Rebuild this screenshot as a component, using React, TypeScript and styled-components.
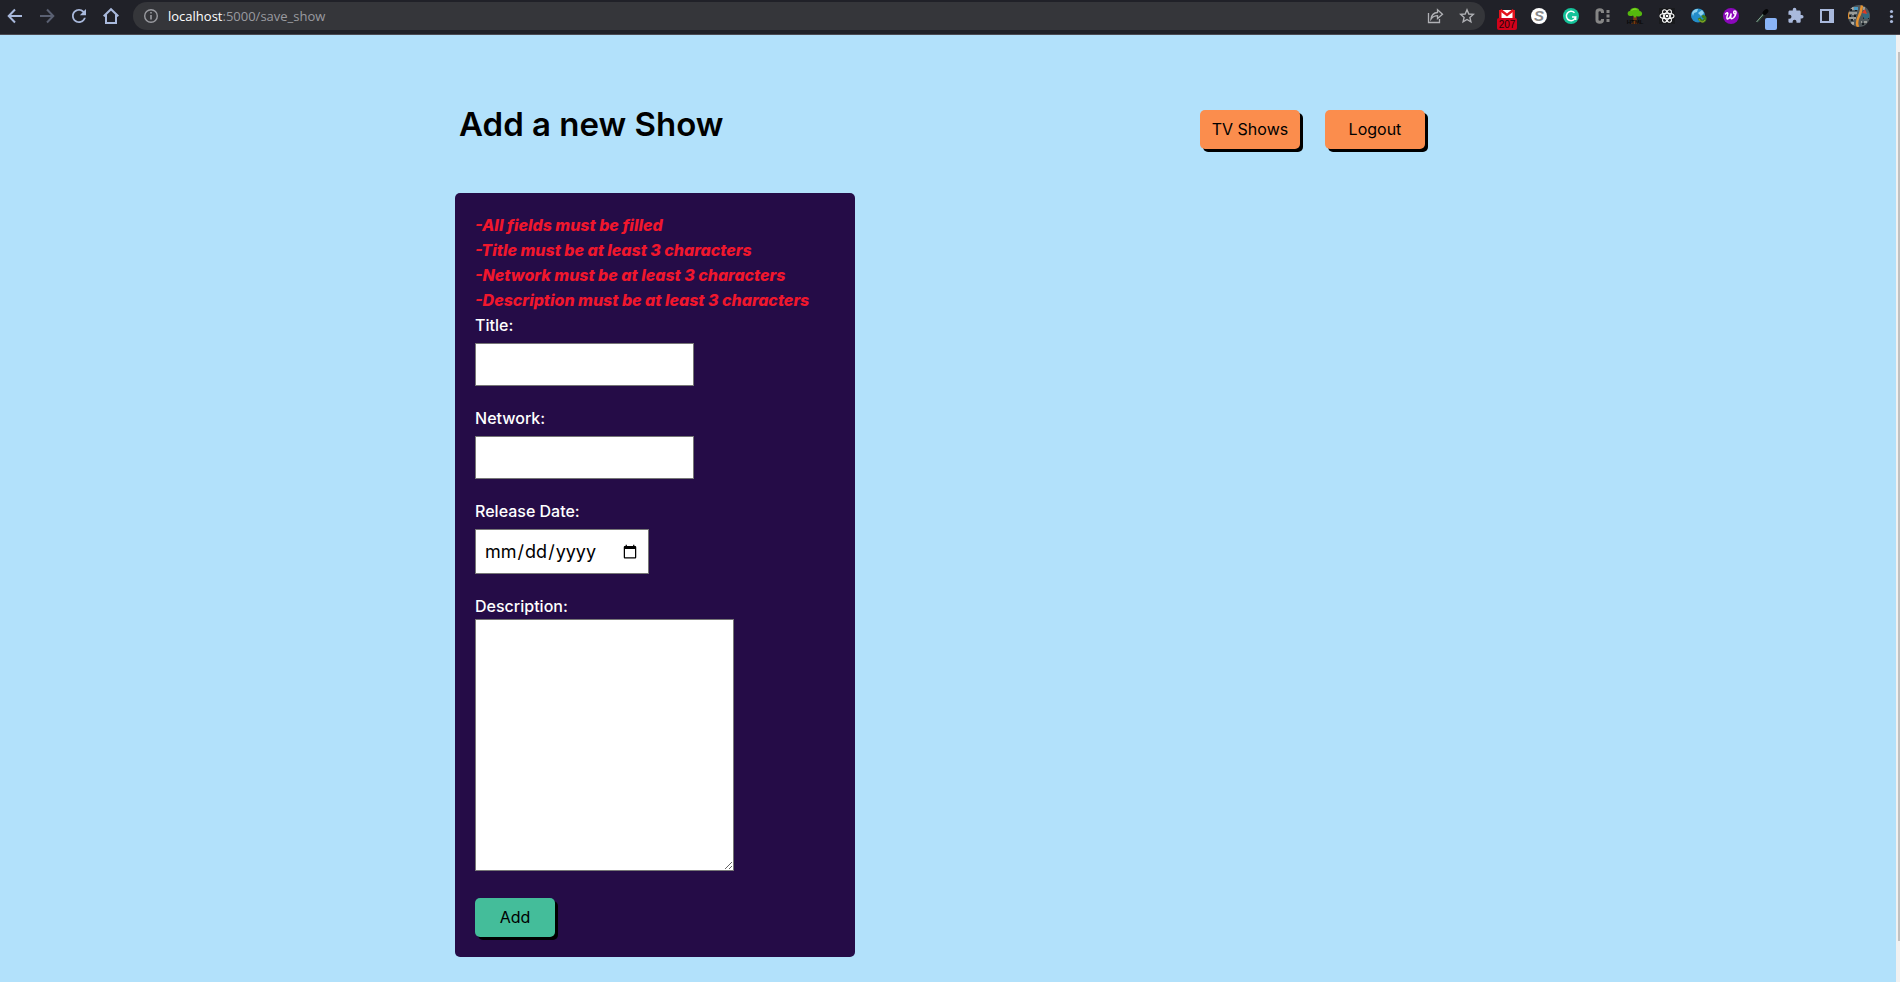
import React from 'react';
import styled, { createGlobalStyle } from 'styled-components';

const Global = createGlobalStyle`
  *, *::before, *::after { box-sizing: border-box; }
  html, body, #root { height: 100%; }
  body {
    margin: 0;
    overflow: hidden;
    background: #b2e1fb;
    color: #000;
    font: 400 16px/25px Inter, "Liberation Sans", sans-serif;
  }
`;

const Window = styled.div`
  display: flex;
  flex-direction: column;
  min-height: 100%;
`;

const Toolbar = styled.nav`
  display: flex;
  align-items: flex-start;
  height: 35px;
  flex: none;
  overflow: hidden;
  background: #202128;
  border-bottom: 1px solid #4a4a52;
`;

const Tool = styled.button<{ $color?: string }>`
  display: block;
  width: 30px;
  height: 32px;
  flex: none;
  padding: 0;
  border: 0;
  background: none;
  color: ${(p) => p.$color ?? '#a9b9dc'};

  svg { display: block; }
`;

const Nav = styled.div`
  display: flex;
  flex: none;
  gap: 2px;
  padding-right: 7px;
`;

const AddressBar = styled.div`
  display: flex;
  align-items: center;
  flex: 1;
  gap: 2px;
  min-width: 0;
  height: 28px;
  margin-top: 2px;
  padding: 0 3px;
  border-radius: 14px;
  background: #35363a;
`;

const Address = styled.p`
  flex: 1;
  margin: 0;
  overflow: hidden;
  color: #9a9ba0;
  font: 13px/28px "Open Sans", "Noto Sans", sans-serif;
  white-space: nowrap;

  b { color: #fff; font-weight: 400; }
`;

const Extensions = styled.div`
  display: flex;
  flex: none;
  gap: 2px;
  margin-right: -6px;
  padding-left: 7px;
`;

const Viewport = styled.div`
  display: flex;
  flex: 1;
`;

const Page = styled.main`
  flex: 1;
  padding: 75px 0 25px;
`;

const ScrollTrack = styled.div`
  display: flex;
  width: 4px;
  padding: 17px 0 41px 2px;
  background: #f1f1f1;
`;

const ScrollThumb = styled.div`
  flex: 1;
  background: #c1c1c1;
`;

const Container = styled.div`
  width: 52%;
  min-width: 720px;
  margin: 0 auto;
`;

const Header = styled.header`
  display: flex;
  justify-content: space-between;
  height: 83px;
  padding: 0 16px 0 4px;
`;

const Heading = styled.h1`
  margin: 0;
  font-size: 33px;
  font-weight: 600;
  line-height: 28px;
`;

const Actions = styled.div`
  display: flex;
  gap: 25px;
`;

const Button = styled.button<{ $tone: string; $width: number }>`
  width: ${(p) => p.$width}px;
  height: 39px;
  padding: 0;
  border: 0;
  border-radius: 5px;
  background: ${(p) => p.$tone};
  box-shadow: 3px 3px 0 #000;
  color: #000;
  font: inherit;
`;

const Panel = styled.form`
  display: flex;
  flex-direction: column;
  align-items: flex-start;
  width: 400px;
  padding: 20px;
  border-radius: 5px;
  background: #250c47;
`;

const Errors = styled.ul`
  margin: 0;
  padding: 0;
  color: #f0172d;
  font-style: italic;
  font-weight: 800;
  list-style: none;
`;

const Label = styled.label`
  color: #fff;
  font-weight: 500;
`;

const Field = styled.input<{ $width: number; $height: number }>`
  width: ${(p) => p.$width}px;
  height: ${(p) => p.$height}px;
  margin: 5px 0 20px;
  padding: 8px;
  border: 1px solid #767676;
  border-radius: 0;
  background: #fff;
  color: #000;
  font: inherit;
  font-size: 18px;

  &::-webkit-calendar-picker-indicator {
    width: 16px;
    height: 16px;
  }
`;

const Area = styled.textarea`
  width: 259px;
  height: 252px;
  margin-bottom: 27px;
  padding: 8px;
  border: 1px solid #767676;
  border-radius: 0;
  background: #fff;
  font: inherit;
`;

function Icon({ label, color, children }: { label: string; color?: string; children: React.ReactNode }) {
  return (
    <Tool type="button" aria-label={label} $color={color}>
      <svg width="30" height="32" viewBox="0 0 30 32" fill="none" stroke="currentColor" strokeWidth="2">
        {children}
      </svg>
    </Tool>
  );
}

const messages = [
  '-All fields must be filled',
  '-Title must be at least 3 characters',
  '-Network must be at least 3 characters',
  '-Description must be at least 3 characters',
];

export default function App() {
  return (
    <Window>
      <Global />
      <Toolbar aria-label="Browser">
        <Nav>
          <Icon label="Back"><path d="M22 16H9M15 9.5 8.7 16l6.3 6.5" /></Icon>
          <Icon label="Forward" color="#5a6072"><path d="M8 16h13M15 9.5l6.3 6.5-6.3 6.5" /></Icon>
          <Icon label="Reload">
            <path
              fill="currentColor"
              stroke="none"
              transform="translate(4.5 5.5) scale(.875)"
              d="M17.65 6.35C16.2 4.9 14.21 4 12 4c-4.42 0-7.99 3.58-7.99 8s3.57 8 7.99 8c3.73 0 6.84-2.55 7.73-6h-2.08c-.82 2.33-3.04 4-5.65 4-3.31 0-6-2.69-6-6s2.69-6 6-6c1.66 0 3.14.69 4.22 1.78L13 11h7V4l-2.35 2.35z"
            />
          </Icon>
          <Icon label="Home"><path d="M7.7 16.3 15 9.2l7.3 7.1M10 14.8V23h10v-8.2" /></Icon>
        </Nav>
        <AddressBar>
          <Icon label="Site information" color="#9a9ba0">
            <circle cx="15" cy="16" r="6.3" strokeWidth="1.4" />
            <path d="M15 15v4.5M15 12v1.6" strokeWidth="1.6" />
          </Icon>
          <Address><b>localhost</b>:5000/save_show</Address>
          <Icon label="Share" color="#b0b1b5">
            <path d="M8.5 13v9.5h11V19" strokeWidth="1.3" />
            <path d="M11 19c.5-4 3-6.3 6.5-6.5V9.7l5 4.5-5 4.3v-2.8c-2.8 0-4.8 1-6.5 3.3z" strokeWidth="1.3" />
          </Icon>
          <Icon label="Bookmark" color="#b0b1b5">
            <path d="m15 9.8 1.8 4.2 4.5.4-3.4 3 1 4.4-3.900-2.300-3.900 2.300 1-4.400-3.400-3 4.500-.4z" strokeWidth="1.4" />
          </Icon>
        </AddressBar>
        <Extensions>
          <Icon label="Mail">
            <path fill="#e3141d" stroke="none" d="M7 10h16v10H7z" />
            <path fill="#fff" stroke="none" d="M9.5 10h11v8h-11z" />
            <path stroke="#e3141d" strokeWidth="2.4" d="m8.500 10 6.500 5 6.500-5" />
            <rect x="5" y="18" width="20" height="12" rx="2" fill="#d0021b" stroke="none" />
            <text x="15" y="28" fill="#1c0508" stroke="none" textAnchor="middle" fontFamily="Liberation Sans, sans-serif" fontSize="10">207</text>
          </Icon>
          <Icon label="Scribe">
            <circle cx="15" cy="16" r="8" fill="#fff" stroke="none" />
            <text x="15" y="21" fill="#8a8a8a" stroke="none" textAnchor="middle" fontFamily="Liberation Sans, sans-serif" fontSize="15" fontStyle="italic" fontWeight="700">S</text>
          </Icon>
          <Icon label="Writing assistant">
            <circle cx="15" cy="16" r="8" fill="#15c39a" stroke="none" />
            <path stroke="#fff" strokeWidth="1.5" d="M18.5 12.7A4.7 4.7 0 1 0 19.7 17H16M19.7 16.3v3.7" />
          </Icon>
          <Icon label="Code" color="#858585">
            <path strokeWidth="3" d="M14.5 13v-1c0-3-5.500-3-5.500 0v8c0 3 5.500 3 5.500 0v-1" />
            <path fill="currentColor" stroke="none" d="M18.5 10h3v3h-3zM18.5 14.5h3v3h-3zM18.5 19h3v3h-3z" />
          </Icon>
          <Icon label="HTML tree">
            <path fill="#7a3d10" stroke="none" d="M13.5 14h3l.5 8 2 2h-8l2-2z" />
            <path fill="#55b80e" stroke="none" d="M8 15c-1-2 0-4 2-4 .5-4 9-4.500 9.500 0 3 0 3.500 4.500 1 5-2 1-3 .5-4 0L15 18l-2-2.500c-2 1-4 .5-5-.5z" />
            <path fill="#83dc25" stroke="none" d="M11 11c1-3 5-3.500 7-1-2-.5-5 0-7 1z" />
            <text x="15" y="24" fill="#08090a" stroke="none" textAnchor="middle" fontFamily="Liberation Sans, sans-serif" fontSize="6" fontWeight="700">HTML</text>
          </Icon>
          <Icon label="React tools" color="#fff">
            <path fill="#191a1d" stroke="none" d="M7 8h16v16H7z" />
            <g strokeWidth="1.1">
              <ellipse cx="15" cy="16" rx="7" ry="2.7" />
              <ellipse cx="15" cy="16" rx="7" ry="2.7" transform="rotate(60 15 16)" />
              <ellipse cx="15" cy="16" rx="7" ry="2.7" transform="rotate(120 15 16)" />
            </g>
            <circle cx="15" cy="16" r="1.3" fill="currentColor" stroke="none" />
          </Icon>
          <Icon label="Globe">
            <circle cx="14" cy="15.5" r="7" fill="#238dc9" stroke="none" />
            <path fill="#8ed2ee" stroke="none" d="M8 13c1-3 4-4.500 6-4l-1 3-3 1-1 3zM14 13l4-3 2 3-3 3z" />
            <path stroke="#3d7d1d" strokeWidth="3" d="M15 18c2 4 5 4 6 1 .5-2-1-3-3-2" />
            <path stroke="#a2af27" strokeWidth="1" d="M15 19c1.500 4 5 3.500 6 1" />
          </Icon>
          <Icon label="W tool">
            <circle cx="15" cy="16" r="8" fill="#8b08bb" stroke="none" />
            <path stroke="#fff" strokeWidth="1.5" strokeLinecap="round" d="M9.500 14c2-2 3-1.500 2 1-1.500 4 0 5.500 2.500 2l1.300-3.500c-1.700 5 0 6.500 2.500 4 2.500-3 3-6.500 1-6.500-1.500 0-1.500 2 0 3" />
          </Icon>
          <Icon label="Color picker">
            <path stroke="#263c31" strokeWidth="2.5" d="m9 22 8-9" />
            <path stroke="#8ba69a" strokeWidth="1" d="m8.500 22 7-8" />
            <path stroke="#050607" strokeWidth="4" strokeLinecap="round" d="m16.500 13 2-2" />
            <rect x="17" y="18" width="12" height="12" rx="2" fill="#8ab4f8" stroke="none" />
          </Icon>
          <Icon label="Extensions">
            <path
              fill="currentColor"
              stroke="none"
              transform="translate(7 7) scale(.72)"
              d="M20.500 11H19V7c0-1.100-.9-2-2-2h-4V3.500a2.500 2.500 0 0 0-5 0V5H4c-1.100 0-2 .9-2 2v3.800h1.500a2.700 2.700 0 0 1 0 5.400H2V20c0 1.100.9 2 2 2h3.800v-1.500a2.700 2.700 0 0 1 5.400 0V22H17c1.100 0 2-.9 2-2v-4h1.500a2.500 2.500 0 0 0 0-5z"
            />
          </Icon>
          <Icon label="Side panel">
            <path fill="currentColor" stroke="none" fillRule="evenodd" d="M8 9h14v14H8zM10 11v10h7V11z" />
          </Icon>
          <Icon label="Profile">
            <clipPath id="face"><circle cx="15" cy="16" r="11" /></clipPath>
            <g clipPath="url(#face)">
              <path fill="#4f585c" stroke="none" d="M4 5h22v22H4z" />
              <path stroke="#b4b3ac" strokeWidth="1.5" strokeDasharray="3 2" d="M6 8h8M5 13h8M5 18h7M7 23h6M9 7v19M20 7v5M23 22h-6" />
              <path stroke="#171c20" strokeDasharray="2 3" d="M6 10h8M5 16h8M7 20h5M18 24h7M19 18h6" />
              <path fill="#32697f" stroke="none" d="M18 13h7v5l-5 1z" />
              <path fill="#4a9bc4" stroke="none" d="M10 7h4v3h-4z" />
              <path fill="#e03a24" stroke="none" d="m18 13 3-4 2 5z" />
              <path stroke="#e5912e" strokeWidth="2.5" d="M18 5c-1 6-1 8-3 11-2 4-3 7-1 11M4 11v8" />
            </g>
          </Icon>
          <Icon label="Menu">
            <g fill="currentColor" stroke="none">
              <circle cx="15.5" cy="11.5" r="1.6" />
              <circle cx="15.5" cy="16.5" r="1.6" />
              <circle cx="15.5" cy="21.5" r="1.6" />
            </g>
          </Icon>
        </Extensions>
      </Toolbar>
      <Viewport>
        <Page>
          <Container>
            <Header>
              <Heading>Add a new Show</Heading>
              <Actions>
                <Button type="button" $tone="#fb8d4d" $width={100}>TV Shows</Button>
                <Button type="button" $tone="#fb8d4d" $width={100}>Logout</Button>
              </Actions>
            </Header>
            <Panel>
              <Errors>
                {messages.map((m) => <li key={m}>{m}</li>)}
              </Errors>
              <Label htmlFor="title">Title:</Label>
              <Field id="title" type="text" $width={219} $height={43} />
              <Label htmlFor="network">Network:</Label>
              <Field id="network" type="text" $width={219} $height={43} />
              <Label htmlFor="release">Release Date:</Label>
              <Field id="release" type="date" $width={174} $height={45} />
              <Label htmlFor="description">Description:</Label>
              <Area id="description" />
              <Button type="button" $tone="#44bd9a" $width={80}>Add</Button>
            </Panel>
          </Container>
        </Page>
        <ScrollTrack><ScrollThumb /></ScrollTrack>
      </Viewport>
    </Window>
  );
}
